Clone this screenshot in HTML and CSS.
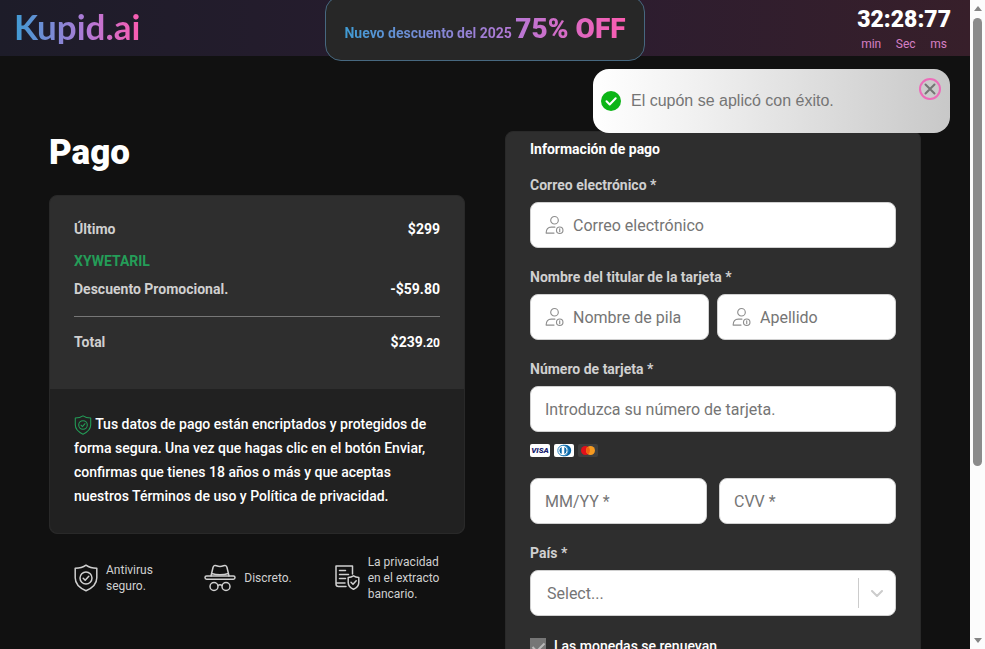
FILE: index.html
```html
<!DOCTYPE html>
<html lang="es">
<head>
    <meta charset="UTF-8">
    <meta name="viewport" content="width=device-width, initial-scale=1.0">
    <title>Kupid.ai - Pago</title>
    <link rel="stylesheet" href="styles.css">
</head>
<body>
    <!-- shared icons -->
    <svg class="icon-defs" aria-hidden="true">
        <symbol id="icon-shield" viewBox="0 0 24 28">
            <path d="M12 1.2C9 3.4 5.500 4.300 1.200 4.300v9.500c0 6 4.300 10.200 10.800 13 6.500-2.800 10.800-7 10.800-13V4.300C18.500 4.300 15 3.400 12 1.200z"/>
            <circle cx="12" cy="14" r="6"/>
            <path d="M9.200 14.200l2 2 3.600-4"/>
        </symbol>
        <symbol id="icon-user" viewBox="0 0 20 20">
            <circle cx="10" cy="5" r="4"/>
            <path d="M9.500 18.500H1.200c0-4 2-6.300 5.300-6.300h4"/>
            <circle cx="15.500" cy="15.500" r="3.400"/>
            <path d="M15.500 14v3"/>
        </symbol>
    </svg>

    <div class="page">
        <header class="header">
            <a href="#" class="logo">Kupid.ai</a>
            <div class="promo">
                <p class="promo-text">Nuevo descuento del 2025 <strong>75% OFF</strong></p>
            </div>
            <div class="timer">
                <div class="timer-digits"><span>32</span>:<span>28</span>:<span>77</span></div>
                <div class="timer-units"><span>min</span><span>Sec</span><span>ms</span></div>
            </div>
        </header>

        <div class="toast" role="status">
            <svg class="toast-check" viewBox="0 0 20 20">
                <circle cx="10" cy="10" r="10" fill="#0cb516"/>
                <path d="M5.500 10.300l3.200 3.200 6-6.300" fill="none" stroke="#fff" stroke-width="2"/>
            </svg>
            <span>El cupón se aplicó con éxito.</span>
            <button type="button" class="toast-close" aria-label="Cerrar">
                <svg viewBox="0 0 12 12"><path d="M1.500 1.500l9 9M10.500 1.500l-9 9"/></svg>
            </button>
        </div>

        <main class="checkout">
            <section class="summary">
                <h1>Pago</h1>
                <div class="card">
                    <div class="totals">
                        <div class="row">
                            <span>Último</span>
                            <span class="price">$299</span>
                        </div>
                        <div class="coupon">XYWETARIL</div>
                        <div class="row">
                            <span>Descuento Promocional.</span>
                            <span class="price">-$59.80</span>
                        </div>
                        <div class="row row-total">
                            <span>Total</span>
                            <span class="price">$239<small>.20</small></span>
                        </div>
                    </div>
                    <p class="secure">
                        <svg class="secure-icon"><use href="#icon-shield"/></svg>
                        Tus datos de pago están encriptados y protegidos de forma segura. Una vez que hagas clic en el botón Enviar, confirmas que tienes 18 años o más y que aceptas nuestros Términos de uso y Política de privacidad.
                    </p>
                </div>
                <ul class="features">
                    <li>
                        <svg class="feature-shield"><use href="#icon-shield"/></svg>
                        <span>Antivirus seguro.</span>
                    </li>
                    <li>
                        <svg class="feature-hat" viewBox="0 0 32 28">
                            <path d="M7 12l2-8.500C9.500 1.500 10.800 1 12.500 1.700c2.400 1 4.600 1 7 0 1.700-.7 3-.2 3.500 1.800L25 12M7.500 9.500c5 1.600 12 1.600 17 0"/>
                            <rect x="1" y="12" width="30" height="3.200" rx="1.600"/>
                            <circle cx="10" cy="22.500" r="4"/>
                            <circle cx="22" cy="22.500" r="4"/>
                            <path d="M14 21.500c1.200-1 2.800-1 4 0"/>
                        </svg>
                        <span>Discreto.</span>
                    </li>
                    <li>
                        <svg class="feature-doc" viewBox="0 0 25 26">
                            <path d="M11 21.500H3.500c-1.500 0-2.500-1-2.500-2.500V1h16.500v8M1 18h9M4.500 5.500h6M4.500 9.500h9M4.500 13.500h6"/>
                            <path d="M18.500 10.800c-1.500 1.100-3.200 1.600-5.300 1.600v5c0 3.200 2.100 5.400 5.300 6.900 3.200-1.500 5.300-3.700 5.300-6.900v-5c-2.100 0-3.800-.5-5.300-1.600z"/>
                            <path d="M16 17.300l2 2 3.200-3.600"/>
                        </svg>
                        <span>La privacidad en el extracto bancario.</span>
                    </li>
                </ul>
            </section>

            <form class="card payment">
                <h2>Información de pago</h2>

                <div class="field">
                    <label for="email">Correo electrónico *</label>
                    <div class="input-box">
                        <svg class="input-icon"><use href="#icon-user"/></svg>
                        <input type="email" id="email" placeholder="Correo electrónico">
                    </div>
                </div>

                <div class="field">
                    <label for="first-name">Nombre del titular de la tarjeta *</label>
                    <div class="names">
                        <div class="input-box">
                            <svg class="input-icon"><use href="#icon-user"/></svg>
                            <input type="text" id="first-name" placeholder="Nombre de pila">
                        </div>
                        <div class="input-box">
                            <svg class="input-icon"><use href="#icon-user"/></svg>
                            <input type="text" aria-label="Apellido" placeholder="Apellido">
                        </div>
                    </div>
                </div>

                <div class="field field-card">
                    <label for="card-number">Número de tarjeta *</label>
                    <div class="input-box">
                        <input type="text" id="card-number" placeholder="Introduzca su número de tarjeta.">
                    </div>
                </div>

                <div class="brands">
                    <span class="brand visa">VISA</span>
                    <span class="brand">
                        <svg viewBox="0 0 20 13">
                            <path d="M9 .8h2.500a5.700 5.700 0 0 1 0 11.400H9z" fill="#0a67a8"/>
                            <circle cx="9" cy="6.500" r="5.200" fill="#fff" stroke="#2b83bd"/>
                            <path d="M7.700 3a3.800 3.800 0 0 0 0 7zM10.300 3a3.800 3.800 0 0 1 0 7z" fill="#0a67a8"/>
                        </svg>
                    </span>
                    <span class="brand mastercard">
                        <svg viewBox="0 0 20 13">
                            <circle cx="7.500" cy="6.500" r="4.500" fill="#e2101b"/>
                            <circle cx="12.500" cy="6.500" r="4.500" fill="#f59a20"/>
                            <path d="M10 2.800a4.500 4.500 0 0 1 0 7.400 4.500 4.500 0 0 1 0-7.400z" fill="#f2600f"/>
                        </svg>
                    </span>
                </div>

                <div class="card-extra">
                    <div class="input-box">
                        <input type="text" aria-label="MM/YY" placeholder="MM/YY *">
                    </div>
                    <div class="input-box">
                        <input type="text" aria-label="CVV" placeholder="CVV *">
                    </div>
                </div>

                <div class="field">
                    <label for="country">País *</label>
                    <div class="input-box select-box">
                        <select id="country">
                            <option>Select...</option>
                        </select>
                        <svg class="chevron" viewBox="0 0 12 7"><path d="M1 1l5 5 5-5"/></svg>
                    </div>
                </div>

                <label class="renew">
                    <input type="checkbox" checked disabled>
                    <span>Las monedas se renuevan.</span>
                </label>
            </form>
        </main>
    </div>

    <div class="scrollbar" aria-hidden="true">
        <span class="arrow arrow-up"></span>
        <span class="thumb"></span>
        <span class="arrow arrow-down"></span>
    </div>
</body>
</html>
```

FILE: styles.css
```css
* {
    box-sizing: border-box;
}

body {
    margin: 0;
    height: 100vh;
    display: flex;
    overflow: hidden;
    background: #111;
    color: #fff;
    font-family: Roboto, "Noto Sans", sans-serif;
    font-size: 14px;
    line-height: 20px;
}

h1, h2, p, ul {
    margin: 0;
    padding: 0;
}

svg {
    flex-shrink: 0;
    fill: none;
    stroke-linecap: round;
    stroke-linejoin: round;
}

.icon-defs {
    position: absolute;
    width: 0;
    height: 0;
}

.page {
    position: relative;
    flex: 1;
    min-width: 0;
    overflow: hidden;
}

/* header */
.header {
    position: relative;
    display: flex;
    justify-content: space-between;
    height: 56px;
    padding: 8px 19px 0 14px;
    background: linear-gradient(90deg, #1d1c29, #251c2d 35%, #2d1d2f 65%, #371f2a);
}

.logo,
.promo-text {
    background: linear-gradient(90deg, #3f9bd3, #b678d6 60%, #fb5cb0);
    -webkit-background-clip: text;
    background-clip: text;
    color: transparent;
}

.logo {
    align-self: flex-start;
    font-family: Lato, sans-serif;
    font-size: 35px;
    font-weight: 700;
    line-height: 36px;
    text-decoration: none;
}

.promo {
    position: absolute;
    top: -4px;
    left: 50%;
    width: 320px;
    height: 65px;
    padding-top: 14px;
    transform: translateX(-50%);
    border: 1px solid #476880;
    border-radius: 16px;
    background: #272727;
    text-align: center;
}

.promo-text {
    display: inline-block;
    font-size: 14px;
    font-weight: 700;
    line-height: 36px;
    white-space: nowrap;
}

.promo-text strong {
    font-size: 28px;
    font-weight: 900;
}

.timer-digits {
    font-size: 23px;
    font-weight: 900;
    line-height: 24px;
}

.timer-units {
    display: flex;
    justify-content: space-between;
    padding: 2px 4px 0;
    color: #d57fc4;
    font-size: 12px;
}

/* toast */
.toast {
    position: absolute;
    top: 69px;
    right: 20px;
    z-index: 2;
    display: flex;
    align-items: center;
    gap: 10px;
    width: 357px;
    height: 64px;
    padding: 0 9px 0 8px;
    border-radius: 16px;
    background: linear-gradient(90deg, #fff, #f0f0f0 30%, #c8c8c8);
    color: #757575;
    font-family: "Liberation Sans", Arial, sans-serif;
    font-size: 16px;
}

.toast-check {
    width: 20px;
    height: 20px;
}

.toast-close {
    display: flex;
    align-items: center;
    justify-content: center;
    align-self: flex-start;
    width: 22px;
    height: 22px;
    margin: 9px 0 0 auto;
    padding: 0;
    border: 2px solid #ec6cb9;
    border-radius: 50%;
    background: transparent;
    cursor: pointer;
}

.toast-close svg {
    width: 12px;
    height: 12px;
    stroke: #757575;
    stroke-width: 2;
}

/* content */
.checkout {
    display: grid;
    grid-template-columns: 1fr 1fr;
    align-items: start;
    gap: 40px;
    padding: 75px 49px 40px;
}

h1 {
    font-size: 35px;
    font-weight: 900;
    line-height: 44px;
    margin-bottom: 20px;
}

h2 {
    font-size: 14px;
    font-weight: 700;
}

.card {
    border: 1px solid #292929;
    border-radius: 8px;
    background: #2e2e2e;
}

.totals {
    padding: 23px 24px 36px;
    font-weight: 700;
}

.row {
    display: flex;
    justify-content: space-between;
    color: #d0d0d0;
}

.price {
    color: #fff;
}

.price small {
    font-size: 12px;
}

.coupon {
    margin: 12px 0 8px;
    color: #249d58;
}

.row-total {
    margin-top: 17px;
    padding-top: 15px;
    border-top: 1px solid #777;
}

.secure {
    padding: 23px 24px 25px;
    border-radius: 0 0 8px 8px;
    background: #212121;
    font-weight: 500;
    line-height: 24px;
}

.secure-icon {
    width: 18px;
    height: 20px;
    vertical-align: middle;
    stroke: #249d58;
    stroke-width: 1.5px;
}

.features {
    display: grid;
    grid-template-columns: repeat(3, 1fr);
    margin-top: 20px;
    padding-left: 25px;
    list-style: none;
    color: #d0d0d0;
    font-size: 12px;
    line-height: 16px;
}

.features li {
    display: flex;
    align-items: center;
    gap: 8px;
}

.features span {
    max-width: 78px;
}

.features svg {
    stroke: #d0d0d0;
    stroke-width: 1.5px;
}

.feature-shield {
    width: 24px;
    height: 28px;
}

.feature-hat {
    width: 32px;
    height: 28px;
}

.feature-doc {
    width: 25px;
    height: 26px;
}

/* payment form */
.payment {
    padding: 7px 24px 24px;
}

.payment h2 {
    margin-bottom: 16px;
}

.field {
    margin-bottom: 19px;
}

.field label {
    display: block;
    margin-bottom: 7px;
    color: #d0d0d0;
    font-weight: 700;
}

.input-box {
    display: flex;
    align-items: center;
    gap: 9px;
    min-width: 0;
    height: 46px;
    padding: 0 14px;
    border: 1px solid #d0d0d0;
    border-radius: 8px;
    background: #fff;
}

.input-icon {
    width: 19px;
    height: 20px;
    stroke: #8e8e8e;
    stroke-width: 1.2px;
}

.input-box input,
.input-box select {
    flex: 1;
    width: 100%;
    min-width: 0;
    height: 100%;
    padding: 0;
    border: 0;
    outline: 0;
    background: transparent;
    color: #757575;
    font-family: inherit;
    font-size: 16px;
}

.input-box input::placeholder {
    color: #757575;
}

.names {
    display: grid;
    grid-template-columns: 1fr 1fr;
    gap: 8px;
}

.field-card {
    margin-bottom: 12px;
}

.brands {
    display: flex;
    gap: 4px;
    margin-bottom: 21px;
}

.brand {
    display: flex;
    align-items: center;
    justify-content: center;
    width: 20px;
    height: 13px;
    border-radius: 2px;
    background: #fff;
}

.brand svg {
    width: 20px;
    height: 13px;
}

.visa {
    color: #1b1f71;
    font-size: 8px;
    font-style: italic;
    font-weight: 900;
    line-height: 13px;
}

.mastercard {
    background: #3f3f3f;
}

.card-extra {
    display: grid;
    grid-template-columns: 1fr 1fr;
    gap: 12px;
    margin-bottom: 19px;
}

.select-box {
    padding: 0 12px 0 16px;
    gap: 0;
}

.input-box select {
    appearance: none;
    height: 30px;
    border-right: 1px solid #ccc;
    border-radius: 0;
}

.chevron {
    width: 12px;
    height: 7px;
    margin-left: 12px;
    stroke: #ccc;
    stroke-width: 2;
    pointer-events: none;
}

.renew {
    display: flex;
    gap: 8px;
    padding-top: 3px;
    font-weight: 500;
    line-height: 16px;
}

.renew input {
    appearance: none;
    display: flex;
    justify-content: center;
    width: 16px;
    height: 16px;
    margin: 0;
    background: #767676;
}

.renew input::after {
    content: "";
    width: 5px;
    height: 10px;
    margin-top: 2px;
    border: solid #bbb;
    border-width: 0 2px 2px 0;
    transform: rotate(45deg);
}

/* page scrollbar */
.scrollbar {
    display: flex;
    flex-direction: column;
    align-items: center;
    width: 15px;
    padding: 6px 0;
    background: #fcfcfc;
}

.arrow {
    border: 4px solid transparent;
}

.arrow-up {
    border-top: 0;
    border-bottom: 5px solid #858585;
}

.arrow-down {
    margin-top: auto;
    border-bottom: 0;
    border-top: 5px solid #858585;
}

.thumb {
    width: 9px;
    height: 69vh;
    margin-top: 7px;
    border-radius: 5px;
    background: #8b8b8b;
}
```
